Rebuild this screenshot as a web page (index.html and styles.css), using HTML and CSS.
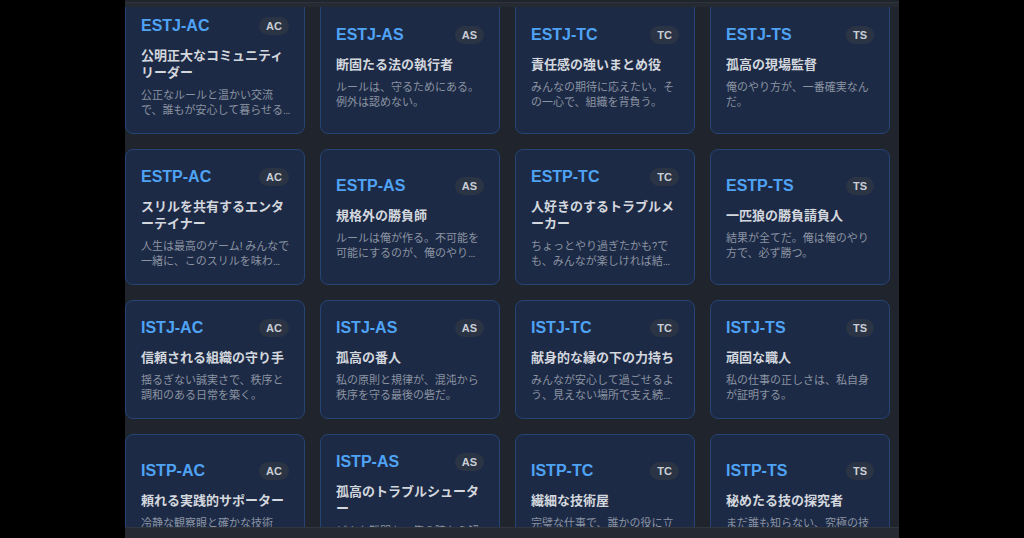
FILE: index.html
```html
<!DOCTYPE html>
<html lang="ja">
<head>
<meta charset="utf-8">
<title>Types</title>
<link rel="stylesheet" href="styles.css">
</head>
<body>
<div class="window">
  <div class="topbar"></div>
  <div class="viewport">
    <div class="grid">
      <div class="card"><div class="head"><span class="code">ESTJ-AC</span><span class="badge">AC</span></div><div class="name">公明正大なコミュニティリーダー</div><div class="desc">公正なルールと温かい交流で、誰もが安心して暮らせる…</div></div>
      <div class="card"><div class="head"><span class="code">ESTJ-AS</span><span class="badge">AS</span></div><div class="name">断固たる法の執行者</div><div class="desc">ルールは、守るためにある。例外は認めない。</div></div>
      <div class="card"><div class="head"><span class="code">ESTJ-TC</span><span class="badge">TC</span></div><div class="name">責任感の強いまとめ役</div><div class="desc">みんなの期待に応えたい。その一心で、組織を背負う。</div></div>
      <div class="card"><div class="head"><span class="code">ESTJ-TS</span><span class="badge">TS</span></div><div class="name">孤高の現場監督</div><div class="desc">俺のやり方が、一番確実なんだ。</div></div>

      <div class="card"><div class="head"><span class="code">ESTP-AC</span><span class="badge">AC</span></div><div class="name">スリルを共有するエンターテイナー</div><div class="desc">人生は最高のゲーム! みんなで一緒に、このスリルを味わ…</div></div>
      <div class="card"><div class="head"><span class="code">ESTP-AS</span><span class="badge">AS</span></div><div class="name">規格外の勝負師</div><div class="desc">ルールは俺が作る。不可能を可能にするのが、俺のやり…</div></div>
      <div class="card"><div class="head"><span class="code">ESTP-TC</span><span class="badge">TC</span></div><div class="name">人好きのするトラブルメーカー</div><div class="desc">ちょっとやり過ぎたかも?でも、みんなが楽しければ結…</div></div>
      <div class="card"><div class="head"><span class="code">ESTP-TS</span><span class="badge">TS</span></div><div class="name">一匹狼の勝負請負人</div><div class="desc">結果が全てだ。俺は俺のやり方で、必ず勝つ。</div></div>

      <div class="card"><div class="head"><span class="code">ISTJ-AC</span><span class="badge">AC</span></div><div class="name">信頼される組織の守り手</div><div class="desc">揺るぎない誠実さで、秩序と調和のある日常を築く。</div></div>
      <div class="card"><div class="head"><span class="code">ISTJ-AS</span><span class="badge">AS</span></div><div class="name">孤高の番人</div><div class="desc">私の原則と規律が、混沌から秩序を守る最後の砦だ。</div></div>
      <div class="card"><div class="head"><span class="code">ISTJ-TC</span><span class="badge">TC</span></div><div class="name">献身的な縁の下の力持ち</div><div class="desc">みんなが安心して過ごせるよう、見えない場所で支え続…</div></div>
      <div class="card"><div class="head"><span class="code">ISTJ-TS</span><span class="badge">TS</span></div><div class="name">頑固な職人</div><div class="desc">私の仕事の正しさは、私自身が証明する。</div></div>

      <div class="card"><div class="head"><span class="code">ISTP-AC</span><span class="badge">AC</span></div><div class="name">頼れる実践的サポーター</div><div class="desc">冷静な観察眼と確かな技術で、困った人をそっと助ける。</div></div>
      <div class="card"><div class="head"><span class="code">ISTP-AS</span><span class="badge">AS</span></div><div class="name">孤高のトラブルシューター</div><div class="desc">どんな難問も、俺の腕なら解決できる。</div></div>
      <div class="card"><div class="head"><span class="code">ISTP-TC</span><span class="badge">TC</span></div><div class="name">繊細な技術屋</div><div class="desc">完璧な仕事で、誰かの役に立ちたい。</div></div>
      <div class="card"><div class="head"><span class="code">ISTP-TS</span><span class="badge">TS</span></div><div class="name">秘めたる技の探究者</div><div class="desc">まだ誰も知らない、究極の技を追い求める。</div></div>
    </div>
  </div>
  <div class="bottombar"></div>
</div>
</body>
</html>
```

FILE: styles.css
```css
* { box-sizing: border-box; }
html, body {
  margin: 0;
  padding: 0;
  background: #000;
  height: 100%;
}
body {
  font-family: "Liberation Sans", "Noto Sans CJK JP", sans-serif;
  overflow: hidden;
}
.window {
  margin-left: 125px;
  width: 774px;
  height: 538px;
  padding-top: 2px;
  display: flex;
  flex-direction: column;
  background: #1f242d;
}
.topbar {
  height: 5px;
  flex: none;
  background: #252a33;
  border-top: 1px solid #2e343e;
}
.viewport {
  flex: 1;
  overflow: hidden;
  padding-right: 10px;
}
.grid {
  margin-top: -9px;
  display: grid;
  grid-template-columns: repeat(4, 180px);
  column-gap: 15px;
  row-gap: 15px;
}
.card {
  background: #1d2a45;
  border: 1px solid #254474;
  border-radius: 8px;
  padding: 17px 15px 15px;
  display: flex;
  flex-direction: column;
  justify-content: center;
}
.head {
  display: flex;
  align-items: center;
  justify-content: space-between;
  height: 20px;
  margin-bottom: 10px;
}
.code {
  font-family: "Liberation Sans", sans-serif;
  font-weight: 700;
  font-size: 16px;
  color: #4fa3f5;
}
.badge {
  height: 18px;
  line-height: 18px;
  padding: 0 7px;
  border-radius: 9px;
  background: #2b3444;
  color: #c9ced6;
  font-size: 11px;
  font-weight: 700;
}
.name {
  font-family: "Noto Sans CJK JP", sans-serif;
  font-size: 13px;
  line-height: 17px;
  font-weight: 700;
  color: #d3d7de;
}
.desc {
  margin-top: 8px;
  margin-right: -4px;
  font-family: "Roboto", "Noto Sans CJK JP", sans-serif;
  font-size: 11px;
  line-height: 15px;
  color: #8a93a2;
  display: -webkit-box;
  -webkit-box-orient: vertical;
  -webkit-line-clamp: 2;
  overflow: hidden;
}
.bottombar {
  height: 11px;
  flex: none;
  background: #262a32;
  border-top: 1px solid #30353e;
}
```
